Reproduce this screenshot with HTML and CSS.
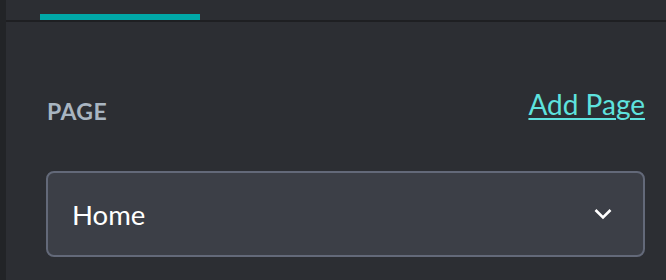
FILE: index.html
```html
<!DOCTYPE html>
<html lang="en">
<head>
  <meta charset="UTF-8">
  <title>Page settings</title>
  <link rel="stylesheet" href="styles.css">
</head>
<body>
  <div class="shell">
    <div class="rail"></div>
    <div class="panel">
      <div class="tabs">
        <div class="tab active"></div>
      </div>
      <div class="content">
        <div class="field-head">
          <span class="label">PAGE</span>
          <a class="link" href="#">Add Page</a>
        </div>
        <div class="select">
          <span class="select-value">Home</span>
          <svg class="chevron" width="18" height="12" viewBox="0 0 18 12">
            <path d="M1.5 2 L9 9.5 L16.5 2" fill="none" stroke="#ffffff" stroke-width="2.6"/>
          </svg>
        </div>
      </div>
    </div>
  </div>
</body>
</html>
```

FILE: styles.css
```css
body {
  margin: 0;
  font-family: Lato, 'Open Sans', sans-serif;
  background: #2c2e33;
  height: 280px;
  overflow: hidden;
}

.shell {
  display: flex;
  height: 280px;
}

.rail {
  width: 6px;
  background: #222427;
}

.panel {
  flex: 1;
}

.tabs {
  height: 20px;
  border-bottom: 2px solid #1e1f22;
  padding-left: 34px;
  display: flex;
  align-items: flex-end;
}

.tab.active {
  width: 160px;
  height: 6px;
  background: #00a8a8;
}

.content {
  padding: 66px 21px 0 40px;
}

.field-head {
  display: flex;
  justify-content: space-between;
  align-items: flex-start;
  height: 83px;
}

.label {
  color: #a9b5c1;
  font-size: 23px;
  line-height: 32px;
  font-weight: 700;
  letter-spacing: 0.4px;
  margin-top: 7px;
  padding-left: 1px;
}

.link {
  color: #5ee2de;
  font-size: 28px;
  line-height: 32px;
  text-decoration: underline;
  text-decoration-thickness: 2px;
  text-underline-offset: 3px;
}

.select {
  height: 86px;
  box-sizing: border-box;
  border: 2px solid #636979;
  border-radius: 8px;
  background: #3c3f47;
  display: flex;
  align-items: center;
  justify-content: space-between;
  padding: 0 31px 0 24px;
}

.select-value {
  color: #ffffff;
  font-size: 27.5px;
  line-height: 33px;
}
```
